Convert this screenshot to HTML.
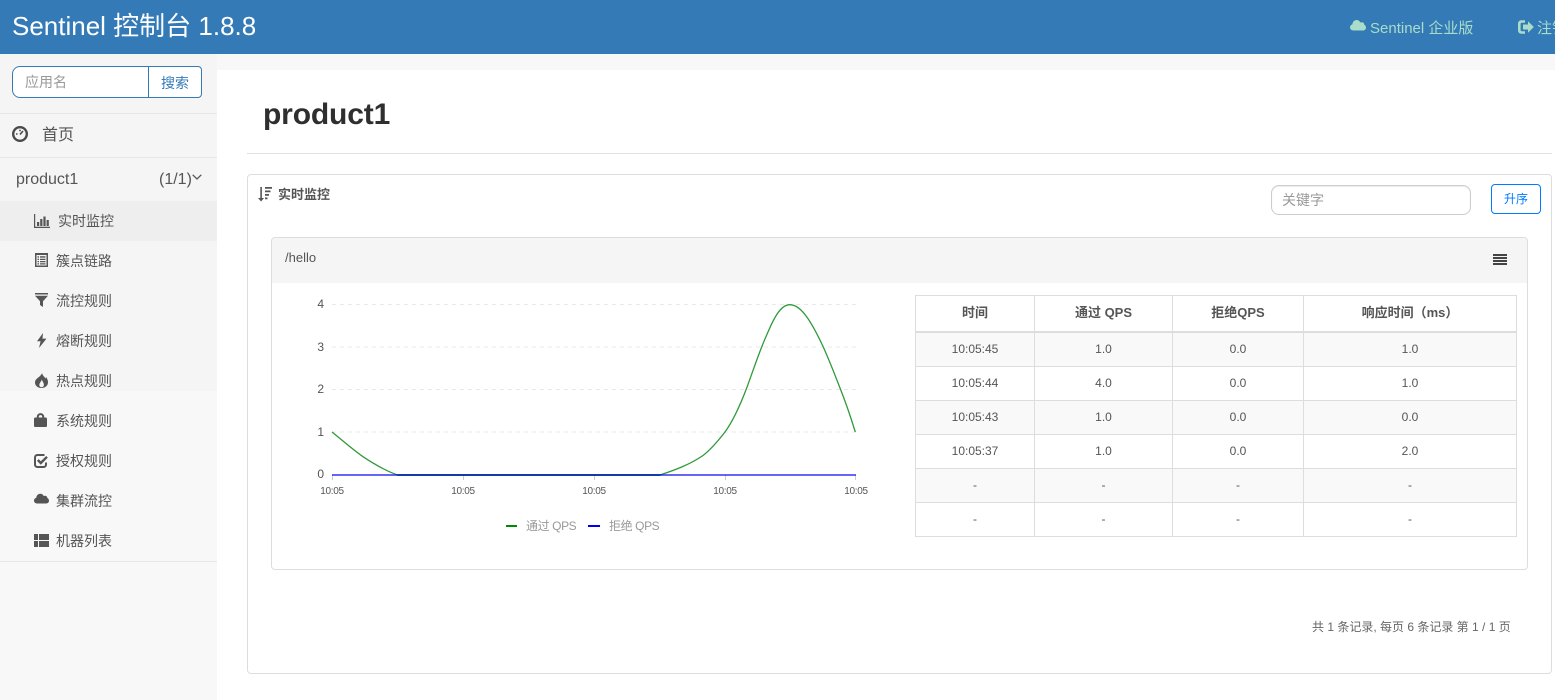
<!DOCTYPE html>
<html lang="zh"><head><meta charset="utf-8"><title>Sentinel 控制台</title>
<style>
*{box-sizing:border-box}
html,body{margin:0;padding:0;width:1555px;height:700px;overflow:hidden;background:#fff;font-family:"Liberation Sans","Noto Sans CJK SC",sans-serif;color:#555}
.a{position:absolute;white-space:nowrap}
.t{position:absolute;white-space:nowrap;line-height:20px;height:20px}
.m{font-size:14px;color:#555}
svg.i{position:absolute;overflow:visible}
table{position:absolute;left:915px;top:295px;width:601px;border-collapse:collapse;table-layout:fixed;font-size:12px;color:#555}
td,th{border:1px solid #ddd;text-align:center;padding:0 0 2px;height:34px}
th{font-size:13px;height:36px;border-bottom:2px solid #ddd;color:#555;padding-bottom:4px}
tr.f td{height:35px;padding-bottom:1px}
tr.o td{background:#f9f9f9}
</style></head><body>
<!-- header -->
<div class="a" style="left:0;top:0;width:1555px;height:54px;background:#337ab7"></div>
<div class="a" style="left:12px;top:9px;font-size:26px;line-height:34px;color:#fff">Sentinel 控制台 1.8.8</div>
<svg class="i" style="left:1350px;top:19px" width="16" height="13" viewBox="0 0 16 13"><path fill="#a9dcc9" d="M3.500 11.500C1.500 11.500 0 10.200 0 8.400 0 6.900 1 5.700 2.400 5.400 2.500 3 4.300 1 6.600 1c1.700 0 3.100 1 3.800 2.500C10.800 3.300 11.300 3.200 11.800 3.200c1.400 0 2.500 1.100 2.500 2.500C15.300 6.100 16 7.300 16 8.600c0 1.700-1.300 2.900-3 2.900z"/></svg>
<div class="t" style="left:1370px;top:19px;font-size:15px;color:#a9dcc9">Sentinel 企业版</div>
<svg class="i" style="left:1518px;top:20px" width="16" height="14" viewBox="0 0 16 14"><path fill="none" stroke="#a9dcc9" stroke-width="2.600" d="M7 1.500H3.500C2 1.500 1.300 2.500 1.300 4v6c0 1.500.7 2.500 2.200 2.500H7"/><path fill="#a9dcc9" d="M5 4.500h5V1.300L15.800 7 10 12.700V9.500H5z"/></svg>
<div class="t" style="left:1537px;top:19px;font-size:15px;color:#a9dcc9">注销</div>

<!-- sidebar -->
<div class="a" style="left:0;top:54px;width:217px;height:646px;background:#f8f8f8"></div>
<div class="a" style="left:0;top:54px;width:217px;height:337px;background:#f5f5f5"></div>
<div class="a" style="left:217px;top:54px;width:1338px;height:16px;background:#f8f8f8"></div>
<div class="a" style="left:12px;top:66px;width:137px;height:32px;background:#fff;border:1px solid #337ab7;border-radius:8px 0 0 8px"></div>
<div class="a" style="left:148px;top:66px;width:54px;height:32px;background:#fff;border:1px solid #337ab7;border-radius:0 4px 4px 0"></div>
<div class="t" style="left:25px;top:72px;font-size:14px;color:#999">应用名</div>
<div class="t" style="left:161px;top:73px;font-size:14px;color:#337ab7">搜索</div>
<div class="a" style="left:0;top:113px;width:217px;height:1px;background:#e7e7e7"></div>
<div class="a" style="left:0;top:157px;width:217px;height:1px;background:#e7e7e7"></div>
<div class="a" style="left:0;top:561px;width:217px;height:1px;background:#e7e7e7"></div>
<div class="a" style="left:0;top:201px;width:217px;height:40px;background:#eee"></div>

<svg class="i" style="left:12px;top:126px" width="16" height="16" viewBox="0 0 16 16"><circle cx="8" cy="8" r="6.800" fill="none" stroke="#4a4a4a" stroke-width="2.400"/><path stroke="#4a4a4a" stroke-width="1.600" d="M8 8.500 11 5M4 8h1.500M8 3.800v1.500"/></svg>
<div class="t" style="left:42px;top:124px;height:20px;font-size:16px;color:#555;margin-top:2px">首页</div>
<div class="t" style="left:16px;top:170px;font-size:16px;color:#555">product1</div>
<div class="t" style="left:159px;top:170px;font-size:16px;color:#555">(1/1)</div>
<svg class="i" style="left:192px;top:174px" width="10" height="6" viewBox="0 0 10 6"><path fill="none" stroke="#555" stroke-width="1.300" d="M.7.800 5 5 9.300.800"/></svg>

<svg class="i" style="left:34px;top:214px" width="16" height="14" viewBox="0 0 16 14"><path fill="#555" d="M0 0h1.200v12.800H16V14H0zM3 8h2.200v4H3zM6.200 5h2.200v7H6.200zM9.400 2.500h2.200V12H9.400zM12.600 6h2.200v6h-2.200z"/></svg>
<div class="t m" style="left:58px;top:211px">实时监控</div>

<svg class="i" style="left:35px;top:253px" width="13" height="14" viewBox="0 0 13 14"><path fill="#555" fill-rule="evenodd" d="M0 0h13v14H0zM1.500 2v10.500h10V2z"/><path fill="#555" d="M2.500 3.300h1.500v1.300H2.500zM5 3.300h5.500v1.300H5zM2.500 5.700h1.500V7H2.500zM5 5.700h5.500V7H5zM2.500 8h1.500v1.300H2.500zM5 8h5.500v1.300H5zM2.500 10.200h1.500v1.300H2.500zM5 10.200h5.500v1.300H5z"/></svg>
<div class="t m" style="left:56px;top:251px">簇点链路</div>

<svg class="i" style="left:35px;top:293px" width="13" height="14" viewBox="0 0 13 14"><path fill="#555" d="M0 0h13v1.500H0zM0 2.800h13L8 8.200V14L5 12V8.200z"/></svg>
<div class="t m" style="left:56px;top:291px">流控规则</div>

<svg class="i" style="left:36px;top:333px" width="11" height="15" viewBox="0 0 11 15"><path fill="#555" d="M7 0 1 8.300h3.600L3 15 10.500 5.600H6.500z"/></svg>
<div class="t m" style="left:56px;top:331px">熔断规则</div>

<svg class="i" style="left:35px;top:373px" width="13" height="15" viewBox="0 0 13 15"><path fill="#555" fill-rule="evenodd" d="M7 0c.5 2.500 2.300 3.500 3.500 5.500C10.800 5 11 4.500 11 4c1.300 1.500 2 3.300 2 5.300C13 12.500 10.500 15 6.500 15S0 12.500 0 9.500C0 6.200 3 5 4.500 3.500 5.300 2.700 6.500 1.500 7 0zM6.800 6.500C6.500 8.500 4.300 9.800 4.300 12c0 1.300 1 2.200 2.300 2.200s2.300-.9 2.300-2.300C8.900 10 7.500 8.500 6.800 6.500z"/></svg>
<div class="t m" style="left:56px;top:371px">热点规则</div>

<svg class="i" style="left:34px;top:413px" width="13" height="14" viewBox="0 0 13 14"><path fill="none" stroke="#555" stroke-width="2" d="M3.800 6V3.800a2.700 2.700 0 0 1 5.400 0V6"/><rect y="4.500" width="13" height="9.500" rx="1.400" fill="#555"/></svg>
<div class="t m" style="left:56px;top:411px">系统规则</div>

<svg class="i" style="left:34px;top:454px" width="14" height="14" viewBox="0 0 14 14"><path fill="none" stroke="#555" stroke-width="2" d="M12 8.500V10.500c0 1.400-1 2.500-2.500 2.500h-6C2 13 1 12 1 10.500v-7C1 2 2 1 3.500 1h7"/><path fill="none" stroke="#555" stroke-width="2.400" d="M3.800 6 6.800 9 13 2.800"/></svg>
<div class="t m" style="left:56px;top:451px">授权规则</div>

<svg class="i" style="left:34px;top:493px" width="15" height="11" viewBox="0 0 15 11"><path fill="#555" d="M3.300 10.500C1.400 10.500 0 9.300 0 7.600 0 6.200 1 5 2.300 4.800 2.400 2.500 4 .7 6.200.7c1.600 0 3 1 3.600 2.300.3-.1.800-.2 1.200-.2 1.300 0 2.300 1 2.400 2.300C14.400 5.500 15 6.600 15 7.800c0 1.600-1.200 2.700-2.800 2.700z"/></svg>
<div class="t m" style="left:56px;top:491px">集群流控</div>

<svg class="i" style="left:34px;top:534px" width="15" height="13" viewBox="0 0 15 13"><path fill="#555" d="M0 0h4v6H0zM0 7h4v6H0zM5 0h10v6H5zM5 7h10v6H5z"/></svg>
<div class="t m" style="left:56px;top:531px">机器列表</div>

<!-- main -->
<div class="t" style="left:263px;top:95px;height:40px;line-height:40px;font-size:30px;font-weight:bold;color:#2f2f2f;letter-spacing:-.15px">product1</div>
<div class="a" style="left:247px;top:153px;width:1305px;height:1px;background:#e0e0e0"></div>
<div class="a" style="left:247px;top:174px;width:1305px;height:500px;border:1px solid #ddd;border-radius:4px"></div>

<svg class="i" style="left:258px;top:187px" width="14" height="15" viewBox="0 0 14 15"><path fill="#555" d="M2.300 0h1.600v11H6L3.100 14.500 0 11h2.300zM7 0h7v1.800H7zM7 3.500h5.500v1.800H7zM7 7h4v1.800H7zM7 10.500h2.500v1.800H7z"/></svg>
<div class="t" style="left:278px;top:185px;font-size:13px;font-weight:bold;color:#555">实时监控</div>

<div class="a" style="left:1271px;top:185px;width:200px;height:30px;border:1px solid #ccc;border-radius:8px;background:#fff;box-shadow:inset 0 1px 1px rgba(0,0,0,.075)"></div>
<div class="t" style="left:1282px;top:190px;font-size:14px;color:#999">关键字</div>
<div class="a" style="left:1491px;top:184px;width:50px;height:30px;border:1px solid #007bff;border-radius:4px;background:#fff"></div>
<div class="t" style="left:1504px;top:189px;font-size:12px;color:#007bff">升序</div>

<!-- panel -->
<div class="a" style="left:271px;top:237px;width:1257px;height:333px;border:1px solid #ddd;border-radius:4px;background:#fff"></div>
<div class="a" style="left:272px;top:238px;width:1255px;height:45px;background:#f5f5f5;border-radius:3px 3px 0 0"></div>
<div class="t" style="left:285px;top:248px;font-size:13px;color:#555">/hello</div>
<svg class="i" style="left:1493px;top:254px" width="14" height="11" viewBox="0 0 14 11"><path fill="#444" d="M0 0h14v2H0zM0 3h14v2H0zM0 6h14v2H0zM0 9h14v2H0z"/></svg>

<!-- chart -->
<svg class="i" style="left:0;top:0" width="1555" height="700" viewBox="0 0 1555 700">
<g stroke="#e8e8e8" stroke-width="1" stroke-dasharray="4 4" fill="none">
<path d="M332 304.500H856M332 347H856M332 389.500H856M332 432H856"/>
</g>
<path d="M332.500 475v5M463.500 475v5M594.500 475v5M725.500 475v5M855.500 475v5" stroke="#ccc"/>
<path fill="none" stroke="#2f9a3a" stroke-width="1.300" d="M332 432C342 440 352 449 363 456.700C374 464 386 471 397.500 475M660 475C675 470 690 464.500 703 455.500C711 449.500 718 441 725 432C733 421 741 403 746.700 388C753 371 759 352 766.700 335C773 320 780 304.700 790 304.700C802 304.700 813 325 823.300 347C830 362 835 375 840 388C846 403 851 418 855.300 432"/>
<path fill="none" stroke="#2f9a3a" stroke-width="2" d="M397.500 475H660"/>
<path fill="none" stroke="#0000f0" stroke-opacity=".6" stroke-width="2" d="M332 475H856"/>
<path d="M506 526h11" stroke="#008a00" stroke-width="2"/>
<path d="M588 526h12" stroke="#0000f0" stroke-width="2"/>
<g font-family="'Liberation Sans','Noto Sans CJK SC',sans-serif" font-size="12" fill="#555" text-anchor="end">
<text x="324" y="308">4</text><text x="324" y="351">3</text><text x="324" y="393">2</text><text x="324" y="436">1</text><text x="324" y="478">0</text>
</g>
<g font-family="'Liberation Sans','Noto Sans CJK SC',sans-serif" font-size="10" fill="#555" text-anchor="middle" letter-spacing="-.3">
<text x="332" y="494">10:05</text><text x="463" y="494">10:05</text><text x="594" y="494">10:05</text><text x="725" y="494">10:05</text><text x="856" y="494">10:05</text>
</g>
<g font-family="'Liberation Sans','Noto Sans CJK SC',sans-serif" font-size="12" fill="#999" letter-spacing="-.4">
<text x="526" y="530">通过 QPS</text><text x="609" y="530">拒绝 QPS</text>
</g>
</svg>

<!-- table -->
<table>
<colgroup><col style="width:119px"><col style="width:138px"><col style="width:131px"><col style="width:213px"></colgroup>
<tr><th>时间</th><th>通过 QPS</th><th>拒绝QPS</th><th>响应时间（ms）</th></tr>
<tr class="o f"><td>10:05:45</td><td>1.0</td><td>0.0</td><td>1.0</td></tr>
<tr><td>10:05:44</td><td>4.0</td><td>0.0</td><td>1.0</td></tr>
<tr class="o"><td>10:05:43</td><td>1.0</td><td>0.0</td><td>0.0</td></tr>
<tr><td>10:05:37</td><td>1.0</td><td>0.0</td><td>2.0</td></tr>
<tr class="o"><td>-</td><td>-</td><td>-</td><td>-</td></tr>
<tr><td>-</td><td>-</td><td>-</td><td>-</td></tr>
</table>

<div class="t" style="left:1312px;top:617px;font-size:12px;color:#666">共 1 条记录, 每页 6 条记录 第 1 / 1 页</div>
</body></html>
